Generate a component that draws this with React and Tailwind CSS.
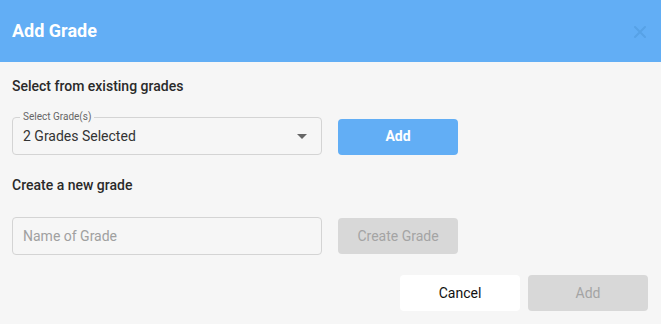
export default function App() {
  return (
    <div className="w-[661px] h-[324px] bg-[#f6f6f6] overflow-hidden" style={{ fontFamily: "Roboto, 'Liberation Sans', sans-serif" }}>
      <div className="h-[62px] bg-[#62aef5] flex items-center justify-between pl-[12px] pr-[15px]">
        <h1 className="text-[18px] font-bold text-white leading-none">Add Grade</h1>
        <svg width="12" height="12" viewBox="0 0 12 12" className="mt-[1px]">
          <path d="M1 1 L11 11 M11 1 L1 11" stroke="#57a2e6" strokeWidth="2" strokeLinecap="round" />
        </svg>
      </div>
      <div className="px-[12px]">
        <div className="pt-[16px] text-[14px] font-medium text-[#2a2a2a] leading-[17px]">Select from existing grades</div>
        <div className="flex items-center gap-[16px] mt-[22px]">
          <div className="relative w-[310px] h-[38px] border border-[#d4d4d4] rounded-[4px] flex items-center pl-[10px] pr-[14px]">
            <span className="absolute left-[7px] top-[-7px] bg-[#f6f6f6] px-[3px] text-[10px] text-[#666] leading-[12px]">Select Grade(s)</span>
            <span className="text-[14px] text-[#333] flex-1">2 Grades Selected</span>
            <svg width="10" height="5" viewBox="0 0 10 5"><path d="M0 0 L10 0 L5 5 Z" fill="#666" /></svg>
          </div>
          <button className="w-[120px] h-[36px] mt-[1px] bg-[#62aef5] rounded-[4px] text-white text-[14px] font-bold">Add</button>
        </div>
        <div className="mt-[22px] text-[14px] font-medium text-[#2a2a2a] leading-[17px]">Create a new grade</div>
        <div className="flex items-center gap-[16px] mt-[23px]">
          <div className="w-[310px] h-[38px] border border-[#d4d4d4] rounded-[4px] flex items-center pl-[10px]">
            <span className="text-[14px] text-[#a0a0a0]">Name of Grade</span>
          </div>
          <button className="w-[120px] h-[36px] bg-[#d8d8d8] rounded-[4px] text-[#a4a4a4] text-[14px]">Create Grade</button>
        </div>
        <div className="flex justify-end gap-[8px] mt-[20px] pr-[1px]">
          <button className="w-[120px] h-[36px] bg-white rounded-[4px] text-[#111] text-[14px] font-normal">Cancel</button>
          <button className="w-[120px] h-[36px] bg-[#d8d8d8] rounded-[4px] text-[#a4a4a4] text-[14px] font-normal">Add</button>
        </div>
      </div>
    </div>
  );
}
